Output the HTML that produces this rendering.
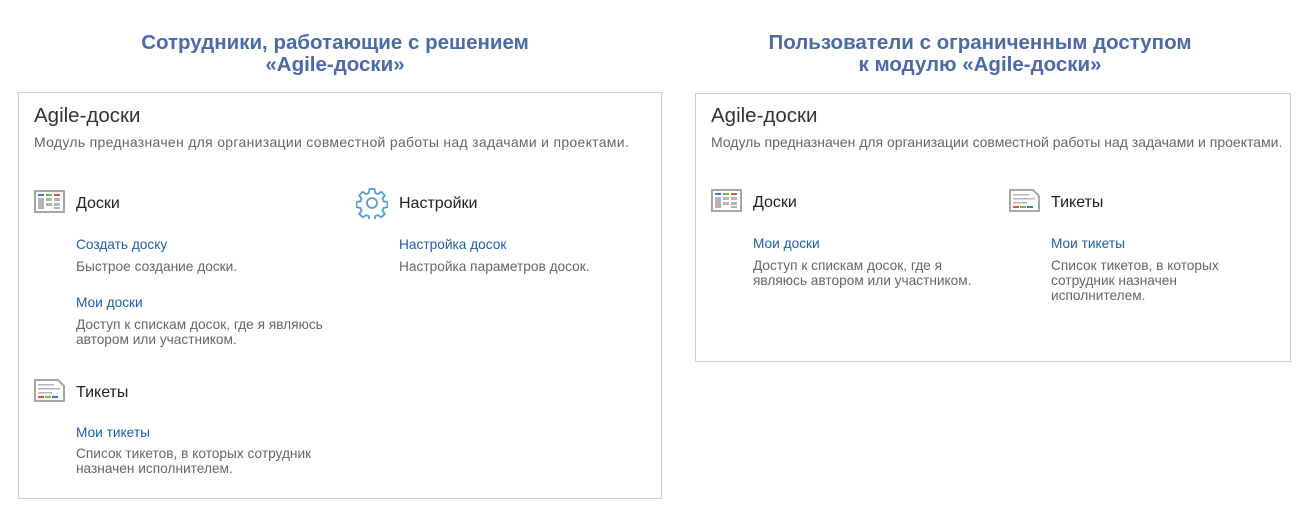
<!DOCTYPE html>
<html><head><meta charset="utf-8"><style>
body{margin:0;width:1300px;height:513px;background:#fff;font-family:"Liberation Sans","DejaVu Sans",sans-serif;position:relative;overflow:hidden}
.t{position:absolute;color:#4a6aa8;font-weight:bold;font-size:20.5px;text-align:center;line-height:22px}
.box{position:absolute;border:1px solid #cfcfcf;background:#fff}
.a{position:absolute;white-space:nowrap}
.h{font-size:20.5px;color:#333}
.d{font-size:14px;color:#666;line-height:15px}
.s{font-size:16px;color:#222}
.l{font-size:13.7px;color:#1d5ea8}
.g{font-size:13.7px;color:#666;line-height:15px}
</style></head><body>
<div class="t" style="left:85px;top:32px;width:500px">Сотрудники, работающие с решением<br>«Agile-доски»</div>
<div class="t" style="left:730px;top:32px;width:500px">Пользователи с ограниченным доступом<br>к модулю «Agile-доски»</div>

<svg width="0" height="0" style="position:absolute"><defs>
<g id="board"><rect x="1" y="1" width="29" height="21" fill="none" stroke="#a6a6a6" stroke-width="2"/>
<rect x="4" y="4" width="6" height="2" fill="#3b7bc4"/><rect x="12" y="4" width="6" height="2" fill="#7cb342"/><rect x="20" y="4" width="6" height="2" fill="#e0533a"/>
<rect x="4" y="8" width="6" height="11" fill="#b5b5b5"/><rect x="12" y="8" width="6" height="3" fill="#b5b5b5"/><rect x="12" y="13" width="6" height="3" fill="#b5b5b5"/><rect x="20" y="8" width="6" height="3" fill="#b5b5b5"/><rect x="20" y="13" width="6" height="3" fill="#b5b5b5"/><rect x="20" y="17" width="6" height="2" fill="#b5b5b5"/></g>
<g id="ticket"><path d="M1 1H24L30 7V22H1Z" fill="none" stroke="#a6a6a6" stroke-width="2"/>
<rect x="4" y="5" width="16" height="1.5" fill="#b5b5b5"/><rect x="4" y="9" width="22" height="1.5" fill="#b5b5b5"/><rect x="4" y="13" width="14" height="1.5" fill="#b5b5b5"/>
<rect x="4" y="17" width="6" height="2" fill="#e0533a"/><rect x="11" y="17" width="6" height="2" fill="#7cb342"/><rect x="18" y="17" width="6" height="2" fill="#3b7bc4"/></g>
</defs></svg>

<div class="box" style="left:18px;top:92px;width:642px;height:405px">
<div class="a h" style="left:15px;top:11px">Agile-доски</div>
<div class="a d" style="left:15px;top:42px;letter-spacing:0.3px">Модуль предназначен для организации совместной работы над задачами и проектами.</div>
<svg class="a" style="left:15px;top:97px" width="32" height="24"><use href="#board"/></svg>
<div class="a s" style="left:57px;top:102px">Доски</div>
<div class="a l" style="left:57px;top:144px">Создать доску</div>
<div class="a g" style="left:57px;top:166px">Быстрое создание доски.</div>
<div class="a l" style="left:57px;top:202px">Мои доски</div>
<div class="a g" style="left:57px;top:224px">Доступ к спискам досок, где я являюсь<br>автором или участником.</div>
<svg class="a" style="left:15px;top:286px" width="32" height="24"><use href="#ticket"/></svg>
<div class="a s" style="left:57px;top:291px">Тикеты</div>
<div class="a l" style="left:57px;top:332px">Мои тикеты</div>
<div class="a g" style="left:57px;top:353px">Список тикетов, в которых сотрудник<br>назначен исполнителем.</div>
<svg class="a" style="left:337px;top:94px" width="32" height="32" viewBox="0 0 32 32"><g fill="none" stroke="#5b9bd5" stroke-width="1.8"><path d="M13.5 2h5l.8 4 2.6 1.1 3.4-2.3 3.5 3.5-2.3 3.4 1.1 2.6 4 .8v5l-4 .8-1.1 2.6 2.3 3.4-3.5 3.5-3.4-2.300-2.6 1.1-.8 4h-5l-.8-4-2.6-1.1-3.4 2.3-3.5-3.5 2.3-3.4-1.1-2.6-4-.8v-5l4-.8 1.1-2.6-2.3-3.4 3.5-3.5 3.4 2.3 2.6-1.1z"/><circle cx="16" cy="16" r="5"/></g></svg>
<div class="a s" style="left:380px;top:102px">Настройки</div>
<div class="a l" style="left:380px;top:144px">Настройка досок</div>
<div class="a g" style="left:380px;top:166px">Настройка параметров досок.</div>
</div>

<div class="box" style="left:695px;top:93px;width:594px;height:267px">
<div class="a h" style="left:15px;top:10px">Agile-доски</div>
<div class="a d" style="left:15px;top:41px">Модуль предназначен для организации совместной работы над задачами и проектами.</div>
<svg class="a" style="left:15px;top:95px" width="32" height="24"><use href="#board"/></svg>
<div class="a s" style="left:57px;top:100px">Доски</div>
<div class="a l" style="left:57px;top:142px">Мои доски</div>
<div class="a g" style="left:57px;top:164px">Доступ к спискам досок, где я<br>являюсь автором или участником.</div>
<svg class="a" style="left:313px;top:95px" width="32" height="24"><use href="#ticket"/></svg>
<div class="a s" style="left:355px;top:100px">Тикеты</div>
<div class="a l" style="left:355px;top:142px">Мои тикеты</div>
<div class="a g" style="left:355px;top:164px">Список тикетов, в которых<br>сотрудник назначен<br>исполнителем.</div>
</div>
</body></html>
